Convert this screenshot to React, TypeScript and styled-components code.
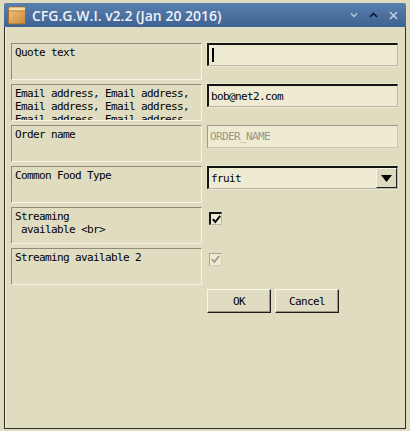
import styled, { createGlobalStyle } from "styled-components";

const GlobalStyle = createGlobalStyle`
  html, body {
    margin: 0;
    padding: 0;
    background: #dfdbbd;
  }
`;

const Desktop = styled.div`
  width: 410px;
  height: 431px;
  box-sizing: border-box;
  padding: 3px 4px 2px 4px;
  background: #dfdbbd;
`;

const Window = styled.div`
  width: 402px;
  height: 426px;
  display: flex;
  flex-direction: column;
`;

const TitleBar = styled.div`
  height: 24px;
  flex-shrink: 0;
  display: flex;
  align-items: center;
  padding: 0 8px 0 4px;
  gap: 6px;
  background: linear-gradient(#5a80b0, #3e6292);
  border-radius: 2px 2px 0 0;
`;

const TitleText = styled.div`
  flex: 1;
  font-family: "Open Sans", "DejaVu Sans", sans-serif;
  font-weight: 600;
  font-size: 14px;
  color: #eef2f7;
  letter-spacing: 0;
`;

const Controls = styled.div`
  display: flex;
  align-items: center;
  gap: 11px;
`;

const Body = styled.div`
  flex: 1;
  box-sizing: border-box;
  border: 1px solid #2c2c2c;
  border-top: none;
  box-shadow: inset 1px 0 0 #f2f0e2;
  background: #e0dcbf;
  padding: 16px 6px 0 6px;
`;

const Form = styled.div`
  display: grid;
  grid-template-columns: 191px 191px;
  column-gap: 5px;
  row-gap: 4px;
  grid-auto-rows: 37px;
`;

const Label = styled.div`
  box-sizing: border-box;
  border: 1px solid;
  border-color: #8e8b76 #f6f4e6 #f6f4e6 #8e8b76;
  padding: 2px 3px;
  overflow: hidden;
  white-space: pre-wrap;
  font-family: "DejaVu Sans Mono", monospace;
  font-size: 11px;
  letter-spacing: -0.62px;
  line-height: 13px;
  color: #000;
`;

const FieldCell = styled.div`
  display: flex;
  align-items: flex-start;
`;

const TextField = styled.div<{ $disabled?: boolean }>`
  box-sizing: border-box;
  width: 191px;
  height: 23px;
  display: flex;
  align-items: center;
  padding: 0 2px;
  background: #eeebd2;
  border-style: solid;
  border-width: ${(p) => (p.$disabled ? "1px" : "2px 1px 1px 2px")};
  border-color: ${(p) =>
    p.$disabled
      ? "#9c9a8c #c9c7b8 #c9c7b8 #9c9a8c"
      : "#141414 #b8b6a6 #b8b6a6 #141414"};
  box-shadow: ${(p) => (p.$disabled ? "none" : "0 0 0 0.5px #f4f2e4")};
  font-family: "DejaVu Sans Mono", monospace;
  font-size: 11px;
  letter-spacing: -0.62px;
  color: ${(p) => (p.$disabled ? "#9a9888" : "#000")};
`;

const Caret = styled.span`
  display: inline-block;
  width: 2px;
  height: 14px;
  background: #000;
  margin-left: 1px;
`;

const Select = styled(TextField)`
  justify-content: space-between;
  padding-right: 0;
`;

const DropButton = styled.div`
  box-sizing: border-box;
  width: 21px;
  height: 20px;
  display: flex;
  align-items: center;
  justify-content: center;
  background: #dedac0;
  border: 1px solid;
  border-color: #f6f4e6 #202020 #202020 #f6f4e6;
`;

const CheckCell = styled(FieldCell)`
  padding: 5px 0 0 2px;
`;

const CheckBox = styled.div<{ $disabled?: boolean }>`
  box-sizing: border-box;
  width: 13px;
  height: 13px;
  display: flex;
  align-items: center;
  justify-content: center;
  background: #eeebd2;
  border-style: solid;
  border-width: ${(p) => (p.$disabled ? "1px" : "2px 1px 1px 2px")};
  border-color: ${(p) =>
    p.$disabled
      ? "#a8a696 #d0cebe #d0cebe #a8a696"
      : "#141414 #b8b6a6 #b8b6a6 #141414"};
`;

const ButtonRow = styled.div`
  grid-column: 2;
  display: flex;
  gap: 4px;
  align-items: flex-start;
`;

const Button = styled.div`
  box-sizing: border-box;
  width: 64px;
  height: 24px;
  display: flex;
  align-items: center;
  justify-content: center;
  background: #e0dcc1;
  border: 1px solid;
  border-color: #f8f6ea #1e1e1e #1e1e1e #f8f6ea;
  box-shadow: inset -1px -1px 0 #9a9780;
  font-family: "DejaVu Sans Mono", monospace;
  font-size: 11px;
  letter-spacing: -0.62px;
  color: #000;
`;

function BoxIcon() {
  return (
    <svg width="18" height="19" viewBox="0 0 18 19">
      <defs>
        <linearGradient id="bx" x1="0" y1="0" x2="1" y2="1">
          <stop offset="0" stopColor="#f4c97e" />
          <stop offset="1" stopColor="#c98637" />
        </linearGradient>
      </defs>
      <rect x="0.5" y="1" width="17" height="17" rx="1.5" fill="url(#bx)" stroke="#9a6428" strokeWidth="0.8" />
      <rect x="1" y="1.5" width="16" height="3" fill="#f7dca4" />
      <line x1="1" y1="5" x2="17" y2="5" stroke="#b07632" strokeWidth="0.8" />
    </svg>
  );
}

function Check({ color }: { color: string }) {
  return (
    <svg width="9" height="9" viewBox="0 0 9 9">
      <path d="M0.8 4.2 L3.3 7 L8.2 0.8" fill="none" stroke={color} strokeWidth="1.9" />
    </svg>
  );
}

function App() {
  return (
    <>
      <GlobalStyle />
      <Desktop>
        <Window>
          <TitleBar>
            <BoxIcon />
            <TitleText>CFG.G.W.I. v2.2 (Jan 20 2016)</TitleText>
            <Controls>
              <svg width="8" height="6" viewBox="0 0 8 6">
                <path d="M1 1.5 L4 4.5 L7 1.5" fill="none" stroke="#b9c9dc" strokeWidth="1.5" />
              </svg>
              <svg width="9" height="6" viewBox="0 0 9 6">
                <path d="M1 5 L4.5 1.5 L8 5" fill="none" stroke="#10192a" strokeWidth="1.6" />
              </svg>
              <svg width="9" height="9" viewBox="0 0 9 9">
                <path d="M1 1 L8 8 M8 1 L1 8" stroke="#c3d1e2" strokeWidth="1.5" />
              </svg>
            </Controls>
          </TitleBar>
          <Body>
            <Form>
              <Label>Quote text</Label>
              <FieldCell>
                <TextField>
                  <Caret />
                </TextField>
              </FieldCell>

              <Label>
                Email address, Email address, Email address, Email address, Email address, Email address,
              </Label>
              <FieldCell>
                <TextField>bob@net2.com</TextField>
              </FieldCell>

              <Label>Order name</Label>
              <FieldCell>
                <TextField $disabled>ORDER_NAME</TextField>
              </FieldCell>

              <Label>Common Food Type</Label>
              <FieldCell>
                <Select>
                  fruit
                  <DropButton>
                    <svg width="11" height="7" viewBox="0 0 11 7">
                      <path d="M0 0 H11 L5.5 7 Z" fill="#000" />
                    </svg>
                  </DropButton>
                </Select>
              </FieldCell>

              <Label>{"Streaming\n available <br>"}</Label>
              <CheckCell>
                <CheckBox>
                  <Check color="#000" />
                </CheckBox>
              </CheckCell>

              <Label>Streaming available 2</Label>
              <CheckCell>
                <CheckBox $disabled>
                  <Check color="#a4a294" />
                </CheckBox>
              </CheckCell>

              <ButtonRow>
                <Button>OK</Button>
                <Button>Cancel</Button>
              </ButtonRow>
            </Form>
          </Body>
        </Window>
      </Desktop>
    </>
  );
}

export default App;
